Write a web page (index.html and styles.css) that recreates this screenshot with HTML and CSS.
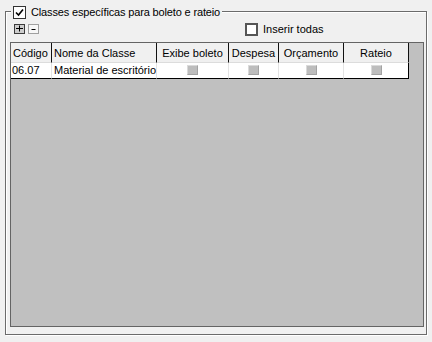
FILE: index.html
```html
<html>

<head>
  <link rel="stylesheet" href="styles.css">
</head>

<body>
  <div class="group">
    <div class="group-title">
      <span class="check">
        <svg viewBox="0 0 11 11" width="11" height="11">
          <polyline points="2,5.5 4.5,8 9,2.5" fill="none" stroke="#000" stroke-width="1.6"></polyline>
        </svg>
      </span>
      <span>Classes específicas para boleto e rateio</span>
    </div>

    <div class="toolbar">
      <span class="tool-btn tool-add">
        <svg viewBox="0 0 9 8" width="9" height="8">
          <path d="M1 3.5h7M4.5 0.5v6" stroke="#000" stroke-width="1"></path>
        </svg>
      </span>
      <span class="tool-btn tool-remove">
        <svg viewBox="0 0 9 8" width="9" height="8">
          <path d="M2.5 4.5h4" stroke="#000" stroke-width="1"></path>
        </svg>
      </span>
      <label class="insert-all">
        <span class="check"></span>
        Inserir todas
      </label>
    </div>

    <div class="grid">
      <table class="grid-table">
        <colgroup>
          <col class="col-code">
          <col class="col-name">
          <col class="col-boleto">
          <col class="col-despesa">
          <col class="col-orcamento">
          <col class="col-rateio">
        </colgroup>
        <thead>
          <tr>
            <th class="left">Código</th>
            <th class="left">Nome da Classe</th>
            <th>Exibe boleto</th>
            <th>Despesa</th>
            <th>Orçamento</th>
            <th>Rateio</th>
          </tr>
        </thead>
        <tbody>
          <tr>
            <td>06.07</td>
            <td>Material de escritório, papelaria</td>
            <td class="center"><span class="cell-check"></span></td>
            <td class="center"><span class="cell-check"></span></td>
            <td class="center"><span class="cell-check"></span></td>
            <td class="center"><span class="cell-check"></span></td>
          </tr>
        </tbody>
      </table>
    </div>
  </div>
</body>

</html>
```

FILE: styles.css
```css
* {
  box-sizing: border-box;
}

body {
  margin: 0;
  background-color: #f0f0f0;
  font-family: "Liberation Sans", Arial, sans-serif;
  font-size: 11px;
  color: #000;
}

.group {
  position: relative;
  width: 422px;
  height: 324px;
  margin: 11px 0 0 5px;
  border: 1px solid #6b6b6b;
  box-shadow: 1px 1px 0 #fff, inset 1px 1px 0 #fff;
  padding: 10px 2px 7px 4px;
  display: flex;
  flex-direction: column;
}

.group-title {
  position: absolute;
  top: -6px;
  left: 5px;
  height: 13px;
  padding: 0 2px;
  display: flex;
  align-items: center;
  gap: 5px;
  line-height: 13px;
  letter-spacing: -0.15px;
  background-color: #f0f0f0;
}

.check {
  width: 13px;
  height: 13px;
  flex: none;
  border: 1px solid #333;
  background-color: #fff;
  display: inline-flex;
  align-items: center;
  justify-content: center;
}

.toolbar {
  height: 14px;
  display: flex;
  align-items: center;
  padding-left: 4px;
}

.tool-btn {
  width: 11px;
  height: 10px;
  margin-right: 3px;
  display: inline-flex;
  align-items: center;
  justify-content: center;
}

.tool-add {
  border: 1px solid #3c3c3c;
  background-color: #cdcdcd;
}

.tool-remove {
  border: 1px solid #a0a0a0;
  background-color: #f7f7f7;
}

.insert-all {
  margin-left: 203px;
  display: flex;
  align-items: center;
  gap: 5px;
  line-height: 13px;
}

.insert-all .check {
  border: 2px solid #555;
}

.grid {
  flex: 1;
  margin-top: 6px;
  border: 1px solid #646464;
  background-color: #c0c0c0;
  overflow: hidden;
}

.grid-table {
  width: 398px;
  table-layout: fixed;
  border-collapse: separate;
  border-spacing: 0;
  font-size: inherit;
}

.col-code { width: 41px; }
.col-name { width: 105px; }
.col-boleto { width: 72px; }
.col-despesa { width: 50px; }
.col-orcamento { width: 65px; }
.col-rateio { width: 65px; }

.grid-table th {
  height: 20px;
  padding: 0 2px;
  font-weight: normal;
  text-align: center;
  white-space: nowrap;
  overflow: hidden;
  background-color: #f0f0f0;
  border-right: 1px solid #111;
  border-bottom: 1px solid #dcdcdc;
}

.grid-table th.left {
  text-align: left;
}

.grid-table td {
  height: 16px;
  padding: 0 2px;
  white-space: nowrap;
  overflow: hidden;
  background-color: #fff;
  border-right: 1px solid #e3e3e3;
  border-bottom: 1px solid #000;
  line-height: 15px;
}

.grid-table td:first-child {
  padding-left: 1px;
}

.grid-table td:last-child {
  border-right: 1px solid #000;
}

.grid-table td.center {
  text-align: center;
}

.cell-check {
  display: inline-block;
  vertical-align: middle;
  width: 11px;
  height: 10px;
  margin-top: -2px;
  background-color: #bdbdbd;
  border: 1px solid;
  border-color: #dadada #a3a3a3 #a3a3a3 #dadada;
}
```
